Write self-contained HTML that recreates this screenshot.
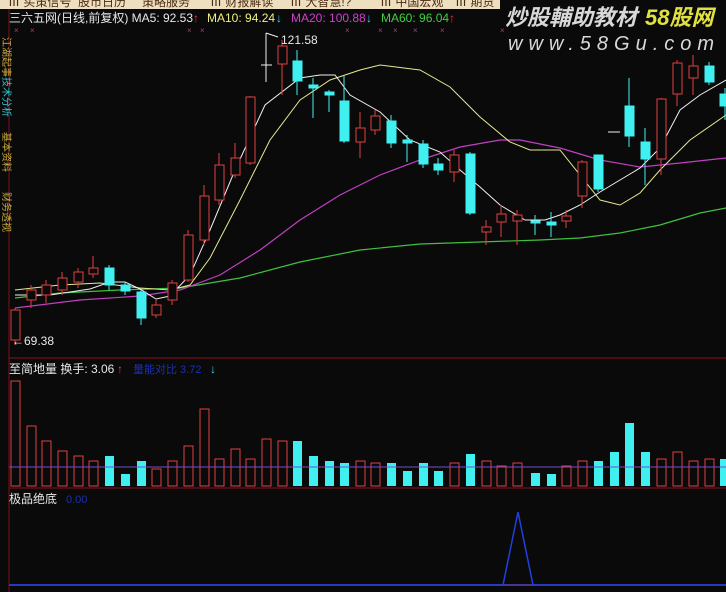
<!DOCTYPE html>
<html><head><meta charset="utf-8">
<style>
html,body{margin:0;padding:0;background:#0a0a0a;width:726px;height:592px;overflow:hidden}
svg{display:block}
text{font-family:"Liberation Sans","Noto Sans CJK SC",sans-serif}
</style></head><body>
<svg width="726" height="592" viewBox="0 0 726 592" xmlns="http://www.w3.org/2000/svg">
<rect width="726" height="592" fill="#0a0a0a"/>
<!-- top menu -->
<rect x="0" y="0" width="500" height="9" fill="#eedfc0"/>
<g font-size="12" fill="#4a2a10">
<text x="8" y="6">Ⅲ 买策信号</text><text x="78" y="6">股市日历</text><text x="142" y="6">策略服务</text>
<text x="210" y="6">Ⅲ 财报解读</text><text x="290" y="6">Ⅲ 大智慧!?</text><text x="380" y="6">Ⅲ 中国宏观</text><text x="455" y="6">Ⅲ 期货</text>
</g>
<!-- left strip -->
<line x1="9" y1="9" x2="9" y2="592" stroke="#7a1020" stroke-width="1"/>
<g font-size="10" fill="#c8b040"><text x="0" y="40" transform="rotate(90 3 40)">江湖起事</text></g>
<g font-size="10" fill="#30c8d0"><text x="0" y="80" transform="rotate(90 3 80)">技术分析</text></g>
<g font-size="10" fill="#c8b040"><text x="0" y="135" transform="rotate(90 3 135)">基本资料</text><text x="0" y="195" transform="rotate(90 3 195)">财务透视</text></g>
<!-- panel separators -->
<line x1="9" y1="358" x2="726" y2="358" stroke="#8a1020"/>
<line x1="9" y1="488" x2="726" y2="488" stroke="#8a1020"/>
<!-- header -->
<text x="9" y="22" font-size="12" fill="#e8e8e8">三六五网(日线,前复权) MA5: 92.53</text>
<text x="193" y="22" font-size="12" fill="#ff3030">↑</text>
<text x="207" y="22" font-size="12" fill="#f0f080">MA10: 94.24</text>
<text x="276" y="22" font-size="12" fill="#40d0f0">↓</text>
<text x="291" y="22" font-size="12" fill="#d040d0">MA20: 100.88</text>
<text x="366" y="22" font-size="12" fill="#40d0f0">↓</text>
<text x="381" y="22" font-size="12" fill="#40d040">MA60: 96.04</text>
<text x="449" y="22" font-size="12" fill="#ff3030">↑</text>
<g fill="#a04080" font-size="8"><text x="14" y="33">×</text><text x="30" y="33">×</text><text x="187" y="33">×</text><text x="200" y="33">×</text><text x="345" y="33">×</text><text x="378" y="33">×</text><text x="393" y="33">×</text><text x="413" y="33">×</text><text x="440" y="33">×</text><text x="500" y="33">×</text></g>
<!-- watermark -->
<text x="505" y="25" font-size="22" font-style="italic" font-weight="bold" fill="#d8d8d8">炒股輔助教材</text>
<text x="645" y="25" font-size="22" font-style="italic" font-weight="bold" fill="#e0e040">58股网</text>
<text x="508" y="50" font-size="20" font-style="italic" fill="#d8d8d8" letter-spacing="6">www.58Gu.com</text>
<!-- MA lines -->
<polyline fill="none" stroke="#40c040" stroke-width="1.2" points="15,298 60,293 120,290 180,288 240,278 300,262 360,250 420,244 480,242 540,240 580,238 620,233 660,225 700,213 726,208"/>
<polyline fill="none" stroke="#c040c0" stroke-width="1.2" points="15,308 80,300 140,296 180,290 220,275 260,250 300,220 340,195 380,175 420,160 460,147 500,140 520,140 560,148 600,160 640,167 680,163 726,158"/>
<polyline fill="none" stroke="#e8e890" stroke-width="1" points="15,290 60,285 100,283 140,288 170,290 190,285 210,258 240,200 270,140 300,100 330,80 360,70 380,65 420,70 450,87 480,117 510,142 530,150 560,150 600,200 620,205 640,193 660,170 690,140 726,115"/>
<polyline fill="none" stroke="#f0f0f0" stroke-width="1" points="15,295 50,295 90,289 110,282 125,282 140,289 156,299 170,296 190,275 210,230 235,170 265,105 300,78 320,75 335,75 350,95 380,112 410,140 440,152 460,170 480,187 500,205 525,220 545,220 560,215 580,205 600,192 620,180 640,168 660,148 680,110 700,95 726,80"/>
<!-- candles -->
<g stroke="#e04040" fill="none" stroke-width="1">
<line x1="15" y1="308" x2="15" y2="345"/><rect x="11" y="310" width="9" height="30" fill="#0a0a0a"/>
<line x1="31" y1="285" x2="31" y2="308"/><rect x="27" y="290" width="9" height="10" fill="#0a0a0a"/>
<line x1="46" y1="280" x2="46" y2="303"/><rect x="42" y="285" width="9" height="10" fill="#0a0a0a"/>
<line x1="62" y1="272" x2="62" y2="295"/><rect x="58" y="278" width="9" height="12" fill="#0a0a0a"/>
<line x1="78" y1="268" x2="78" y2="288"/><rect x="74" y="272" width="9" height="10" fill="#0a0a0a"/>
<line x1="93" y1="256" x2="93" y2="278"/><rect x="89" y="268" width="9" height="6" fill="#0a0a0a"/>
<line x1="156" y1="300" x2="156" y2="318"/><rect x="152" y="305" width="9" height="10" fill="#0a0a0a"/>
<line x1="172" y1="280" x2="172" y2="305"/><rect x="168" y="283" width="9" height="17" fill="#0a0a0a"/>
<line x1="188" y1="230" x2="188" y2="282"/><rect x="184" y="235" width="9" height="45" fill="#0a0a0a"/>
<line x1="204" y1="185" x2="204" y2="245"/><rect x="200" y="196" width="9" height="44" fill="#0a0a0a"/>
<line x1="219" y1="153" x2="219" y2="205"/><rect x="215" y="165" width="9" height="35" fill="#0a0a0a"/>
<line x1="235" y1="143" x2="235" y2="178"/><rect x="231" y="158" width="9" height="17" fill="#0a0a0a"/>
<line x1="250" y1="96" x2="250" y2="165"/><rect x="246" y="97" width="9" height="66" fill="#0a0a0a"/>
<line x1="282" y1="40" x2="282" y2="95"/><rect x="278" y="46" width="9" height="18" fill="#0a0a0a"/>
<line x1="360" y1="112" x2="360" y2="158"/><rect x="356" y="128" width="9" height="14" fill="#0a0a0a"/>
<line x1="375" y1="110" x2="375" y2="135"/><rect x="371" y="116" width="9" height="14" fill="#0a0a0a"/>
<line x1="454" y1="150" x2="454" y2="182"/><rect x="450" y="155" width="9" height="17" fill="#0a0a0a"/>
<line x1="486" y1="220" x2="486" y2="245"/><rect x="482" y="227" width="9" height="5" fill="#0a0a0a"/>
<line x1="501" y1="205" x2="501" y2="237"/><rect x="497" y="214" width="9" height="8" fill="#0a0a0a"/>
<line x1="517" y1="210" x2="517" y2="245"/><rect x="513" y="215" width="9" height="6" fill="#0a0a0a"/>
<line x1="566" y1="210" x2="566" y2="228"/><rect x="562" y="216" width="9" height="5" fill="#0a0a0a"/>
<line x1="582" y1="160" x2="582" y2="208"/><rect x="578" y="162" width="9" height="34" fill="#0a0a0a"/>
<line x1="661" y1="98" x2="661" y2="175"/><rect x="657" y="99" width="9" height="60" fill="#0a0a0a"/>
<line x1="677" y1="60" x2="677" y2="106"/><rect x="673" y="63" width="9" height="31" fill="#0a0a0a"/>
<line x1="693" y1="55" x2="693" y2="95"/><rect x="689" y="66" width="9" height="12" fill="#0a0a0a"/>
</g>
<g fill="#40f0f0" stroke="#40f0f0">
<line x1="109" y1="265" x2="109" y2="290"/><rect x="105" y="268" width="9" height="17"/>
<line x1="125" y1="282" x2="125" y2="295"/><rect x="121" y="285" width="9" height="6"/>
<line x1="141" y1="290" x2="141" y2="325"/><rect x="137" y="292" width="9" height="26"/>
<line x1="297" y1="50" x2="297" y2="95"/><rect x="293" y="61" width="9" height="20"/>
<line x1="313" y1="78" x2="313" y2="118"/><rect x="309" y="85" width="9" height="3"/>
<line x1="329" y1="90" x2="329" y2="112"/><rect x="325" y="92" width="9" height="3"/>
<line x1="344" y1="75" x2="344" y2="143"/><rect x="340" y="101" width="9" height="40"/>
<line x1="391" y1="115" x2="391" y2="148"/><rect x="387" y="121" width="9" height="22"/>
<line x1="407" y1="135" x2="407" y2="162"/><rect x="403" y="140" width="9" height="3"/>
<line x1="423" y1="140" x2="423" y2="168"/><rect x="419" y="144" width="9" height="20"/>
<line x1="438" y1="158" x2="438" y2="175"/><rect x="434" y="164" width="9" height="6"/>
<line x1="470" y1="152" x2="470" y2="215"/><rect x="466" y="154" width="9" height="59"/>
<line x1="535" y1="215" x2="535" y2="235"/><rect x="531" y="221" width="9" height="2"/>
<line x1="551" y1="212" x2="551" y2="237"/><rect x="547" y="222" width="9" height="3"/>
<line x1="598" y1="155" x2="598" y2="192"/><rect x="594" y="155" width="9" height="34"/>
<line x1="629" y1="78" x2="629" y2="147"/><rect x="625" y="106" width="9" height="30"/>
<line x1="645" y1="128" x2="645" y2="185"/><rect x="641" y="142" width="9" height="17"/>
<line x1="709" y1="62" x2="709" y2="85"/><rect x="705" y="66" width="9" height="16"/>
<line x1="725" y1="88" x2="725" y2="120"/><rect x="720" y="94" width="9" height="12"/>
</g>
<g stroke="#f0f0f0" fill="none"><line x1="266" y1="33" x2="266" y2="82"/><line x1="261" y1="65" x2="272" y2="65"/><line x1="266" y1="33" x2="278" y2="37"/><line x1="608" y1="132" x2="620" y2="132"/></g>
<text x="281" y="44" font-size="12" fill="#e8e8e8">121.58</text>
<text x="12" y="345" font-size="12" fill="#e8e8e8">←69.38</text>
<!-- volume panel -->
<text x="9" y="373" font-size="12" fill="#e8e8e8">至简地量  换手: 3.06</text>
<text x="117" y="373" font-size="12" fill="#ff3030">↑</text>
<text x="133" y="373" font-size="11" fill="#1a30b0">量能对比  3.72</text>
<text x="210" y="373" font-size="12" fill="#40d0f0">↓</text>
<g stroke="#e04040" fill="#0a0a0a">
<rect x="11" y="381" width="9" height="105"/><rect x="27" y="426" width="9" height="60"/><rect x="42" y="441" width="9" height="45"/><rect x="58" y="451" width="9" height="35"/><rect x="74" y="456" width="9" height="30"/><rect x="89" y="461" width="9" height="25"/>
<rect x="152" y="469" width="9" height="17"/><rect x="168" y="461" width="9" height="25"/><rect x="184" y="446" width="9" height="40"/><rect x="200" y="409" width="9" height="77"/><rect x="215" y="459" width="9" height="27"/><rect x="231" y="449" width="9" height="37"/><rect x="246" y="459" width="9" height="27"/><rect x="262" y="439" width="9" height="47"/><rect x="278" y="441" width="9" height="45"/>
<rect x="356" y="461" width="9" height="25"/><rect x="371" y="463" width="9" height="23"/><rect x="450" y="463" width="9" height="23"/><rect x="482" y="461" width="9" height="25"/><rect x="497" y="466" width="9" height="20"/><rect x="513" y="463" width="9" height="23"/><rect x="562" y="466" width="9" height="20"/><rect x="578" y="461" width="9" height="25"/><rect x="657" y="459" width="9" height="27"/><rect x="673" y="452" width="9" height="34"/><rect x="689" y="461" width="9" height="25"/><rect x="705" y="459" width="9" height="27"/>
</g>
<g fill="#40f0f0">
<rect x="105" y="456" width="9" height="30"/><rect x="121" y="474" width="9" height="12"/><rect x="137" y="461" width="9" height="25"/>
<rect x="293" y="441" width="9" height="45"/><rect x="309" y="456" width="9" height="30"/><rect x="325" y="461" width="9" height="25"/><rect x="340" y="463" width="9" height="23"/><rect x="387" y="463" width="9" height="23"/><rect x="403" y="471" width="9" height="15"/><rect x="419" y="463" width="9" height="23"/><rect x="434" y="471" width="9" height="15"/><rect x="466" y="454" width="9" height="32"/><rect x="531" y="473" width="9" height="13"/><rect x="547" y="474" width="9" height="12"/><rect x="594" y="461" width="9" height="25"/><rect x="610" y="452" width="9" height="34"/><rect x="625" y="423" width="9" height="63"/><rect x="641" y="452" width="9" height="34"/><rect x="720" y="459" width="9" height="27"/>
</g>
<line x1="9" y1="467" x2="726" y2="467" stroke="#7050d0" stroke-width="1"/>
<!-- bottom panel -->
<text x="9" y="503" font-size="12" fill="#e8e8e8">极品绝底</text>
<text x="66" y="503" font-size="11" fill="#1a30b0">0.00</text>
<line x1="9" y1="585" x2="726" y2="585" stroke="#6040c0" stroke-width="1.5"/>
<polyline fill="none" stroke="#2040e0" stroke-width="1.5" points="9,585 503,585 518,512 533,585 726,585"/>
</svg>
</body></html>
